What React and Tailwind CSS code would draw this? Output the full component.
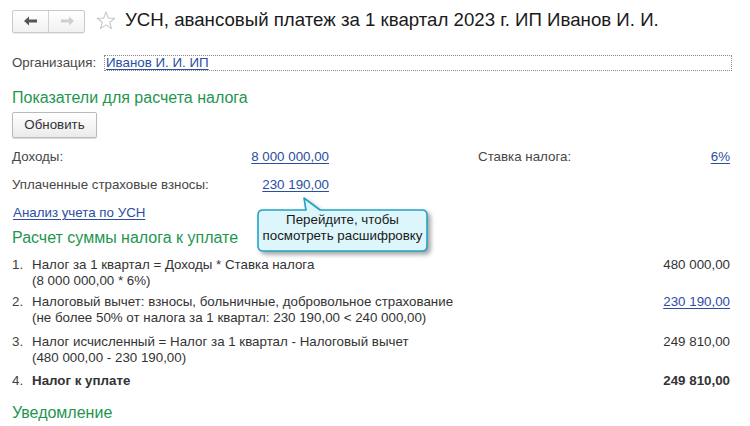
function NavArrow({ dir, color }) {
  return (
    <svg width="14" height="10" viewBox="0 0 14 10">
      {dir === "left" ? (
        <path d="M0 5 L5 0.5 V3.5 H13 V6.5 H5 V9.5 Z" fill={color} />
      ) : (
        <path d="M14 5 L9 0.5 V3.5 H1 V6.5 H9 V9.5 Z" fill={color} />
      )}
    </svg>
  );
}

function Star() {
  return (
    <svg width="20" height="19" viewBox="0 0 20 19">
      <path
        d="M10 1 L12.3 7.1 L18.8 7.3 L13.7 11.3 L15.5 17.6 L10 13.9 L4.5 17.6 L6.3 11.3 L1.2 7.3 L7.7 7.1 Z"
        fill="none"
        stroke="#c9c9c9"
        strokeWidth="1.1"
        strokeLinejoin="round"
      />
    </svg>
  );
}

function Link({ children, className = "" }) {
  return (
    <span className={`text-[#2b4ea2] underline underline-offset-2 decoration-1 ${className}`}>
      {children}
    </span>
  );
}

function Heading({ children, className = "" }) {
  return (
    <div className={`h-[20px] flex items-center text-[16px] text-[#1f9650] ${className}`}>
      {children}
    </div>
  );
}

function Item({ n, lines, value, bold, className = "" }) {
  return (
    <div className={`flex items-start leading-[16px] ${className}`}>
      <div className="w-[20px] text-[#404040]">{n}.</div>
      <div className={`flex-1 text-[#333] ${bold ? "font-bold" : ""}`}>
        {lines.map((l, i) => (
          <div key={i}>{l}</div>
        ))}
      </div>
      <div className={`text-right text-[#333] ${bold ? "font-bold" : ""}`}>{value}</div>
    </div>
  );
}

export default function App() {
  return (
    <div
      className="relative w-[750px] h-[426px] overflow-hidden bg-white pl-[12px] pr-[20px] text-[13.33px]"
      style={{ fontFamily: '"Liberation Sans", Arial, sans-serif' }}
    >
      {/* header */}
      <div className="h-[42px] flex items-center">
        <div className="flex h-[23px] rounded-[2px] border border-[#c9c9c9] bg-gradient-to-b from-white to-[#f1f1f1] shadow-[0_1px_1px_rgba(0,0,0,0.08)]">
          <div className="w-[36px] flex items-center justify-center border-r border-[#d0d0d0]">
            <NavArrow dir="left" color="#555" />
          </div>
          <div className="w-[35px] flex items-center justify-center">
            <NavArrow dir="right" color="#cfcfcf" />
          </div>
        </div>
        <div className="ml-[11px] mt-[-2px]">
          <Star />
        </div>
        <div className="ml-[9px] text-[18.67px] text-[#1a1a1a] leading-none mt-[-2px]">
          УСН, авансовый платеж за 1 квартал 2023 г. ИП Иванов И. И.
        </div>
      </div>

      {/* organization */}
      <div className="mt-[13px] h-[16px] flex items-center">
        <div className="w-[92px] text-[#474747]">Организация:</div>
        <div className="flex-1 h-[16px] mr-[-2px] border border-dotted border-[#8a8a8a] flex items-center pl-[1px]">
          <Link>Иванов И. И. ИП</Link>
        </div>
      </div>

      <Heading className="mt-[17px]">Показатели для расчета налога</Heading>

      <div className="mt-[4px]">
        <div className="w-[85px] h-[26px] flex items-center justify-center rounded-[2px] border border-[#b9b9b9] bg-gradient-to-b from-white to-[#ebebeb] shadow-[0_1px_1px_rgba(0,0,0,0.15)] text-[#333]">
          Обновить
        </div>
      </div>

      <div className="mt-[10px] h-[18px] flex items-center">
        <div className="w-[317px] flex justify-between">
          <span className="text-[#474747]">Доходы:</span>
          <Link>8 000 000,00</Link>
        </div>
        <div className="ml-[149px] flex-1 flex justify-between">
          <span className="text-[#474747]">Ставка налога:</span>
          <Link>6%</Link>
        </div>
      </div>

      <div className="mt-[10px] h-[18px] flex items-center">
        <div className="w-[317px] flex justify-between">
          <span className="text-[#474747]">Уплаченные страховые взносы:</span>
          <Link>230 190,00</Link>
        </div>
      </div>

      <div className="mt-[10px] h-[18px] flex items-center pl-[1px]">
        <Link>Анализ учета по УСН</Link>
      </div>

      <Heading className="mt-[6px]">Расчет суммы налога к уплате</Heading>

      <Item
        className="mt-[9px]"
        n="1"
        lines={["Налог за 1 квартал = Доходы * Ставка налога", "(8 000 000,00 * 6%)"]}
        value="480 000,00"
      />
      <Item
        className="mt-[5px]"
        n="2"
        lines={[
          "Налоговый вычет: взносы, больничные, добровольное страхование",
          "(не более 50% от налога за 1 квартал: 230 190,00 < 240 000,00)",
        ]}
        value={<Link>230 190,00</Link>}
      />
      <Item
        className="mt-[8px]"
        n="3"
        lines={["Налог исчисленный = Налог за 1 квартал - Налоговый вычет", "(480 000,00 - 230 190,00)"]}
        value="249 810,00"
      />
      <Item className="mt-[7px]" n="4" lines={["Налог к уплате"]} value="249 810,00" bold />

      <Heading className="mt-[14px]">Уведомление</Heading>

      {/* tooltip */}
      <div className="absolute left-[256px] top-[196px] w-[176px] h-[60px]">
        <svg
          width="176"
          height="60"
          viewBox="0 0 176 60"
          className="absolute inset-0 drop-shadow-[3px_3px_2px_rgba(0,0,0,0.35)]"
        >
          <path
            d="M7 14 H50 L48 2 L64 14 H166 Q171 14 171 19 V50 Q171 55 166 55 H7 Q2 55 2 50 V19 Q2 14 7 14 Z"
            fill="#dcf6fc"
            stroke="#22a3c2"
            strokeWidth="1.6"
            strokeLinejoin="round"
          />
        </svg>
        <div className="absolute left-[2px] top-[16px] w-[169px] text-center text-[#1a1a1a] leading-[16px]">
          <div>Перейдите, чтобы</div>
          <div>посмотреть расшифровку</div>
        </div>
      </div>
    </div>
  );
}
